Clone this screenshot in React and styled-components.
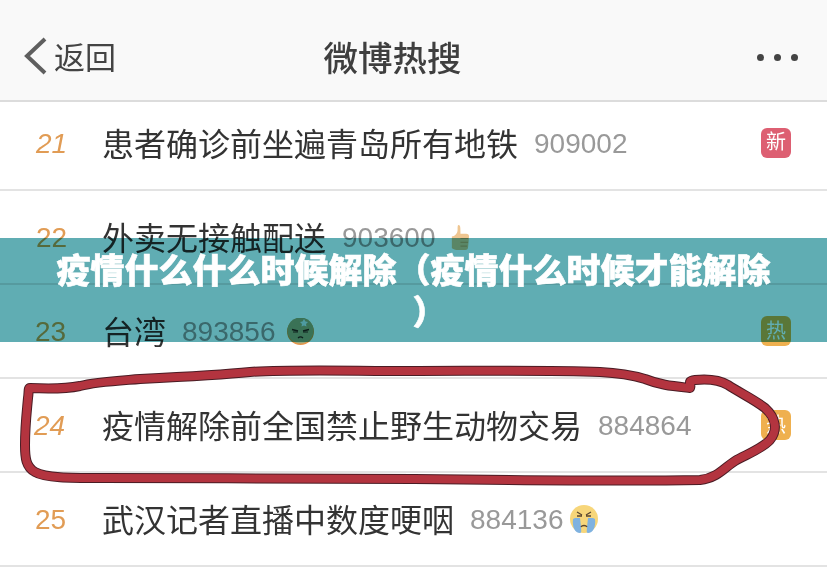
import React from 'react';
import styled, { createGlobalStyle } from 'styled-components';

const Global = createGlobalStyle`
  html, body { margin: 0; padding: 0; background: #fff; }
  body { font-family: "Noto Sans CJK SC", "Liberation Sans", sans-serif; }
`;

const Page = styled.div`
  position: relative;
  width: 827px;
  height: 580px;
  overflow: hidden;
  background: #fff;
`;

const NavBar = styled.header`
  display: grid;
  grid-template-columns: 1fr auto 1fr;
  align-items: center;
  box-sizing: border-box;
  height: 102px;
  padding: 12px 29px 0 24px;
  background: #f9f9f9;
  border-bottom: 2px solid #dcdcdc;
  color: #444;
`;

const Back = styled.div`
  display: flex;
  align-items: center;
  gap: 6px;
  font-size: 31px;
  line-height: 40px;
  color: #444;
`;

const NavTitle = styled.h1`
  margin: 0 37px 0 0;
  font-size: 34.500px;
  line-height: 44px;
  font-weight: 500;
  color: #3f3f3f;
`;

const More = styled.div`
  display: flex;
  justify-content: flex-end;
  gap: 10px;
  margin-top: 3px;
`;

const Dot = styled.span`
  width: 7px;
  height: 7px;
  border-radius: 50%;
  background: #444;
`;

const Row = styled.div`
  display: flex;
  align-items: center;
  box-sizing: border-box;
  height: ${p => (p.$first ? 89 : 94)}px;
  padding: 0 36px ${p => (p.$first ? 6 : 0)}px ${p => p.$left}px;
  border-bottom: 2px solid #e3e3e3;
`;

const Rank = styled.span`
  width: ${p => 102 - p.$left}px;
  flex: none;
  margin-top: 2px;
  font-family: "Liberation Sans", sans-serif;
  font-size: 28px;
  font-style: ${p => (p.$italic ? 'italic' : 'normal')};
  color: #e19c55;
`;

const Topic = styled.span`
  margin-bottom: 2px;
  font-size: 32px;
  line-height: 44px;
  color: #333;
  white-space: nowrap;
`;

const Count = styled.span`
  margin: 2px 0 0 16px;
  font-family: "Liberation Sans", sans-serif;
  font-size: 28px;
  color: #999;
`;

const Emoji = styled.svg`
  flex: none;
  margin-left: ${p => p.$gap}px;
`;

const Badge = styled.span`
  display: flex;
  align-items: center;
  justify-content: center;
  flex: none;
  box-sizing: border-box;
  width: 30px;
  height: 30px;
  padding-bottom: 3px;
  margin-left: auto;
  border-radius: 6px;
  background: ${p => p.$color};
  color: #fff;
  font-size: 20px;
  line-height: 26px;
  font-weight: 400;
`;

const Banner = styled.div`
  position: absolute;
  left: 0;
  right: 0;
  top: 238px;
  height: 104px;
  box-sizing: border-box;
  padding: 10px 50px 0;
  &::before {
    content: "";
    position: absolute;
    inset: 0;
    background: #60adb3;
    mix-blend-mode: multiply;
  }
`;

const BannerTitle = styled.h2`
  position: relative;
  margin: 0;
  color: #fff;
  font-size: 34px;
  line-height: 42px;
  font-weight: 900;
  text-align: center;
  line-break: anywhere;
  -webkit-text-stroke: 0.6px #fff;
`;

const ClosingBracket = styled.span`
  padding-left: 32px;
`;

const Scribble = styled.svg`
  position: absolute;
  left: 0;
  top: 0;
  pointer-events: none;
`;

const Chevron = () => (
  <svg width="24" height="38" viewBox="0 0 24 38" fill="none">
    <path d="M21 2 L3 19 L21 36" stroke="#5f5f5f" strokeWidth="4" />
  </svg>
);

const Thumb = () => (
  <Emoji $gap={14} width="21" height="27" viewBox="0 0 22 28">
    <path d="M10 1c2 0 2 3 2 7l0 2h6c2 0 3 1 3 3l-1 11c0 2-1 3-3 3H8c-2 0-4-1-5-2V13c3 0 6-3 6-7 0-3 0-5 1-5z" fill="#efc691" />
    <path d="M12 15h8M12 19h8M12 23h7" stroke="#c99a63" strokeWidth="1" />
  </Emoji>
);

const Dizzy = () => (
  <Emoji $gap={12} width="27" height="27" viewBox="0 0 27 27">
    <circle cx="13.500" cy="13.500" r="13.500" fill="#e8964a" />
    <circle cx="13.500" cy="12.500" r="13" fill="#9aa87a" />
    <path d="M5 11.500l6 1.500M22 11.500l-6 1.500" stroke="#1f2c26" strokeWidth="1.500" />
    <path d="M6 14h5M16 14h5" stroke="#1f2c26" strokeWidth="1.200" />
    <path d="M11 20c1.500-1.500 3.500-1.500 5 0" stroke="#1f2c26" strokeWidth="1.200" fill="none" />
    <path d="M17 1l1.500 2.500L21 4l-2 2 .5 2.500L17 7.500 14.500 8.500 15 6l-2-2 2.500-.5z" fill="#cfe4e6" />
  </Emoji>
);

const Crying = () => (
  <Emoji $gap={7} width="28" height="30" viewBox="0 0 28 30">
    <circle cx="14" cy="15" r="14" fill="#f7d67a" />
    <path d="M3 15c-1 8 2 14 7 14 2 0 1-3 1-6l-1-9H5z" fill="#7fb2e0" />
    <path d="M25 15c1 8-2 14-7 14-2 0-1-3-1-6l1-9h5z" fill="#7fb2e0" />
    <path d="M7 8l5 3M21 8l-5 3M7 12h5M16 12h5" stroke="#5a4630" strokeWidth="1.300" />
    <path d="M11 23c1-2 5-2 6 0" stroke="#5a4630" strokeWidth="1.300" fill="none" />
  </Emoji>
);

const rows = [
  { rank: 21, left: 36, italic: true, topic: '患者确诊前坐遍青岛所有地铁', count: '909002', badge: ['新', '#dd5f72'], first: true },
  { rank: 22, left: 36, topic: '外卖无接触配送', count: '903600', emoji: <Thumb /> },
  { rank: 23, left: 35, topic: '台湾', count: '893856', emoji: <Dizzy />, badge: ['热', '#efb04f'] },
  { rank: 24, left: 34, italic: true, topic: '疫情解除前全国禁止野生动物交易', count: '884864', badge: ['热', '#efb04f'] },
  { rank: 25, left: 35, topic: '武汉记者直播中数度哽咽', count: '884136', emoji: <Crying /> },
];

const scribblePath =
  'M30 388 C50 389 65 389 80 386 C95 382 115 381 140 379 C180 377 220 375 250 372 C290 369 350 371 414 371 C480 371 550 370 600 372 C620 373 635 376 645 379 C660 385 672 386 690 388 C692 384 686 381 695 380 C705 379 718 379 728 385 C742 394 755 400 765 408 C776 418 778 430 770 440 C762 449 745 455 735 461 C725 467 718 478 700 480 C640 481 500 480 414 479 C330 479 200 478 100 478 C70 478 45 478 35 472 C26 467 25 458 25 445 C25 425 27 410 28 398 C29 392 28 388 30 388 Z';

export default function App() {
  return (
    <Page>
      <Global />
      <NavBar>
        <Back>
          <Chevron />
          <span>返回</span>
        </Back>
        <NavTitle>微博热搜</NavTitle>
        <More>
          <Dot />
          <Dot />
          <Dot />
        </More>
      </NavBar>
      {rows.map(r => (
        <Row key={r.rank} $first={r.first} $left={r.left}>
          <Rank $left={r.left} $italic={r.italic}>{r.rank}</Rank>
          <Topic>{r.topic}</Topic>
          <Count>{r.count}</Count>
          {r.emoji}
          {r.badge && <Badge $color={r.badge[1]}>{r.badge[0]}</Badge>}
        </Row>
      ))}
      <Banner>
        <BannerTitle>疫情什么什么时候解除（疫情什么时候才能解除<ClosingBracket>）</ClosingBracket></BannerTitle>
      </Banner>
      <Scribble width="827" height="580" viewBox="0 0 827 580" fill="none">
        <path d={scribblePath} stroke="#4a1c24" strokeWidth="10" strokeLinejoin="round" />
        <path d={scribblePath} stroke="#b3343f" strokeWidth="8" strokeLinejoin="round" />
      </Scribble>
    </Page>
  );
}
